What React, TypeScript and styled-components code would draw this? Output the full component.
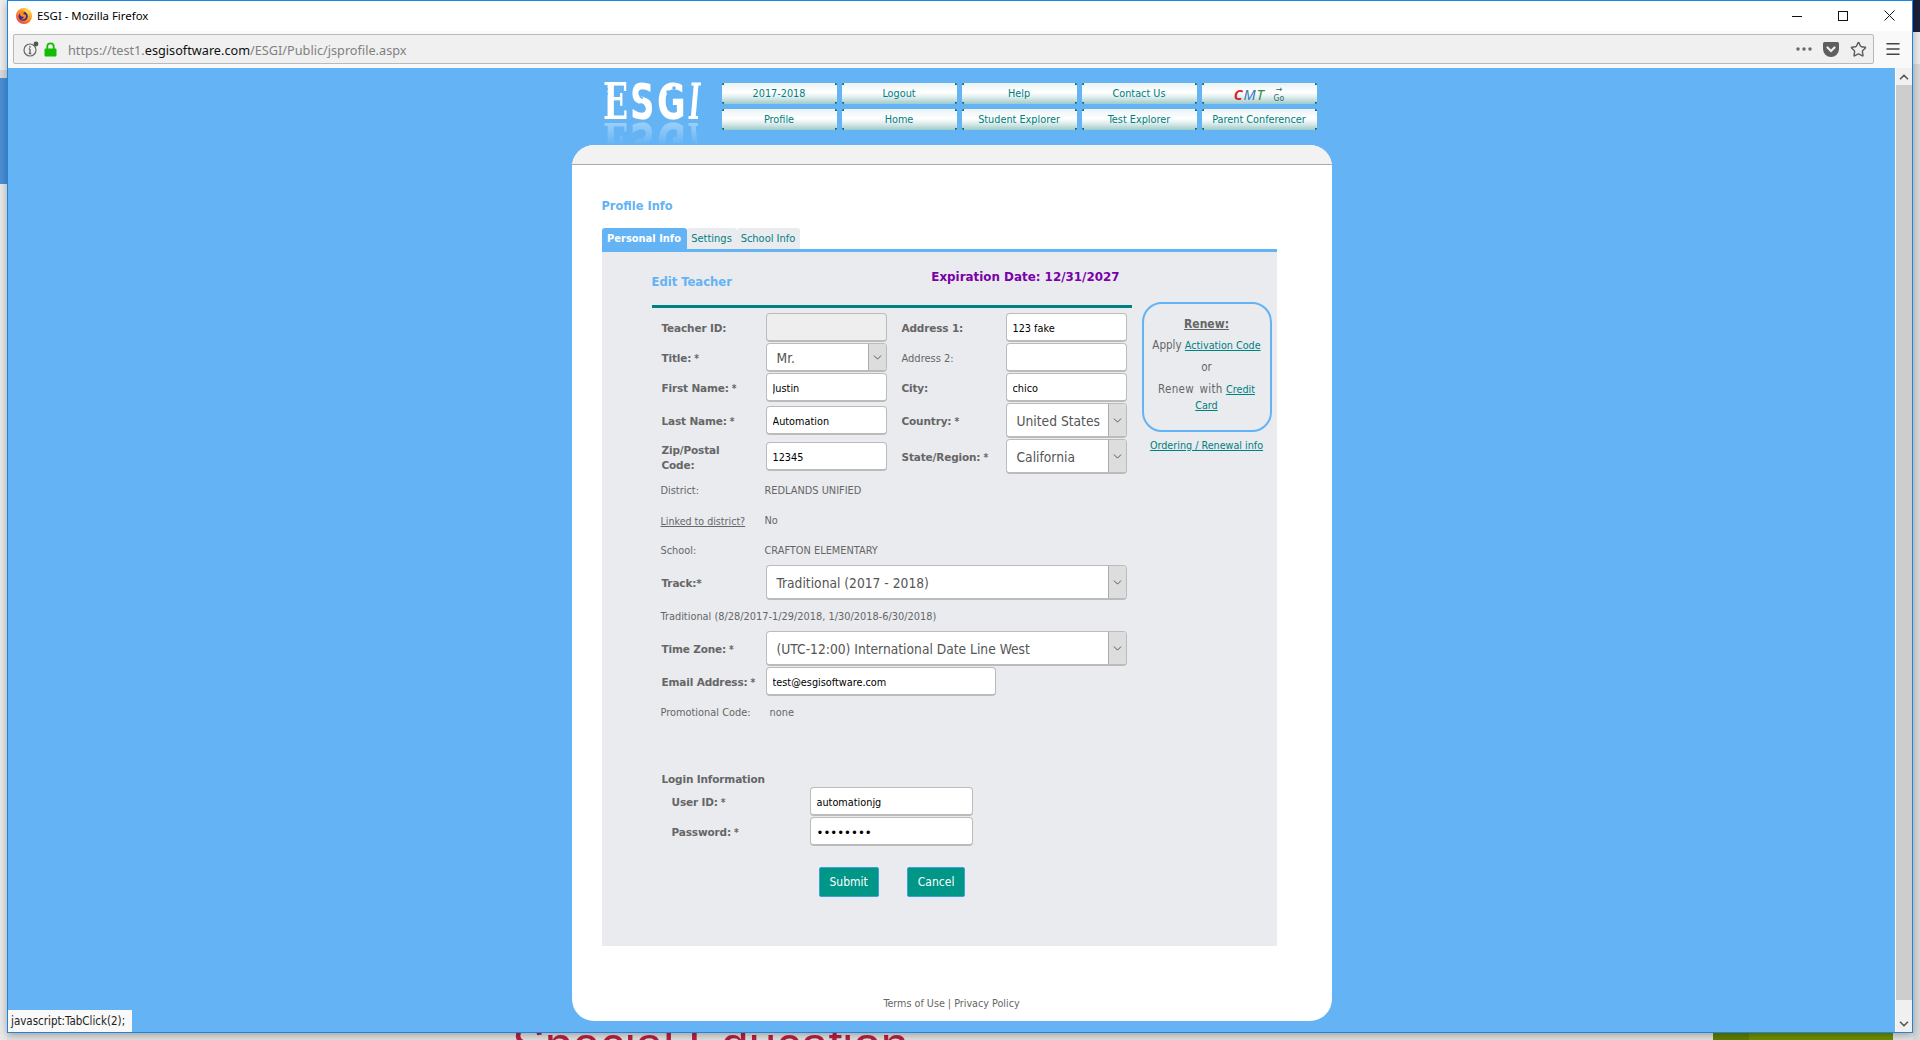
import React from "react";
import styled, { createGlobalStyle } from "styled-components";
import { ChevronDown, ChevronUp, Menu, Star } from "lucide-react";

const TAHOMA = `"DejaVu Sans Condensed", "DejaVu Sans", sans-serif`;
const VERDANA = `"DejaVu Sans", Verdana, sans-serif`;
const UI = `"Noto Sans", "Open Sans", sans-serif`;
const SKY = "#63b3f5";
const TEAL = "#008080";

const Global = createGlobalStyle`
  html, body { margin: 0; padding: 0; background: #e4e4e4; overflow: hidden; }
  * { box-sizing: border-box; }
`;

const Desktop = styled.div`
  position: relative;
  width: 1920px;
  height: 1040px;
  overflow: hidden;
  font-family: ${TAHOMA};
  background:
    linear-gradient(#eeeeee 0 70px, #d9d9d9 70px 78px, #4a8fd6 78px 184px, #e9e9e9 184px) left top / 7px 100% no-repeat,
    linear-gradient(#1a1f3a 0 32px, #ececec 32px 64px, #d8d8d8 64px) right top / 7px 100% no-repeat,
    #e2e2e2;
`;

const BackgroundText = styled.div`
  position: absolute;
  left: 512px;
  top: 1020px;
  font: 49.5px/1 "Liberation Sans", sans-serif;
  color: #b8203f;
  white-space: nowrap;
`;

const BackgroundBar = styled.div`
  position: absolute;
  left: 1713px;
  top: 1032px;
  width: 180px;
  height: 8px;
  background: linear-gradient(90deg, #5f7f00 0 36px, #6d8f00 36px);
`;

const Window = styled.div`
  position: absolute;
  left: 7px;
  top: 0;
  width: 1906px;
  height: 1033px;
  border: 1px solid #1b85e0;
  display: flex;
  flex-direction: column;
  background: #fff;
  box-shadow: 0 2px 8px rgba(0, 0, 0, 0.3);
`;

const TitleBar = styled.div`
  height: 30px;
  flex: none;
  display: flex;
  align-items: center;
  padding: 0 0 1px 8px;
  background: #fff;
`;

const AppTitle = styled.span`
  margin-left: 5px;
  font: 11.4px ${UI};
  color: #000;
`;

const WindowControls = styled.div`
  margin-left: auto;
  display: flex;
  color: #111;
`;

const ControlButton = styled.span`
  width: 46px;
  height: 29px;
  display: flex;
  align-items: center;
  justify-content: center;
`;

const Toolbar = styled.div`
  height: 37px;
  flex: none;
  display: flex;
  align-items: flex-start;
  padding: 3px 0 0 5px;
  background: #f9f9f9;
`;

const UrlBar = styled.div`
  width: 1861px;
  height: 30px;
  display: flex;
  align-items: center;
  padding-left: 9px;
  background: #f0f0f0;
  border: 1px solid #b9b9b9;
  border-radius: 2px;
`;

const LockSlot = styled.span`
  margin-left: 5px;
  display: flex;
`;

const UrlText = styled.span`
  margin-left: 11px;
  padding-top: 2px;
  font: 12.7px ${UI};
  color: #808080;
  white-space: nowrap;
`;

const UrlDomain = styled.span`
  color: #111;
`;

const UrlActions = styled.div`
  margin-left: auto;
  display: flex;
  align-items: center;
  gap: 11px;
  padding-right: 6px;
  color: #5c5c5c;
`;

const MenuButton = styled.div`
  width: 38px;
  height: 30px;
  display: flex;
  align-items: center;
  justify-content: center;
  color: #444;
`;

const Viewport = styled.div`
  flex: 1;
  position: relative;
  display: flex;
  min-height: 0;
  background: ${SKY};
`;

const PageArea = styled.div`
  flex: 1;
  display: flex;
  flex-direction: column;
  align-items: center;
  overflow: hidden;
`;

const Scrollbar = styled.div`
  width: 17px;
  flex: none;
  display: flex;
  flex-direction: column;
  border-left: 1px solid #fff;
  background: #f0f0f0;
`;

const ScrollArrow = styled.div`
  height: 17px;
  flex: none;
  display: flex;
  align-items: center;
  justify-content: center;
  color: #5a5a5a;
`;

const ScrollThumb = styled.div`
  height: 915px;
  flex: none;
  background: #cdcdcd;
`;

const ScrollTrack = styled.div`
  flex: 1;
`;

const StatusTip = styled.div`
  position: absolute;
  left: 0;
  bottom: 0;
  width: 124px;
  height: 22px;
  display: flex;
  align-items: center;
  padding-left: 3px;
  background: #f9f9f9;
  font: 11.5px ${TAHOMA};
  color: #222;
`;

const Header = styled.header`
  width: 760px;
  height: 77px;
  flex: none;
  display: flex;
  align-items: flex-start;
  padding: 15px 0 0 31px;
`;

const LogoWord = styled.div`
  position: relative;
  width: 96px;
  height: 38px;
  flex: none;
  display: flex;
  color: #fff;
  -webkit-box-reflect: below 0 linear-gradient(transparent 35%, rgba(255, 255, 255, 0.4));
`;

const LogoLetter = styled.span<{ $width: number; $scale: number; $serif?: boolean; $skew?: number }>`
  width: ${(p) => p.$width}px;
  flex: none;
  overflow: visible;
  white-space: nowrap;
  font: bold 50px/38px ${(p) => (p.$serif ? `"DejaVu Serif", serif` : `"DejaVu Sans", sans-serif`)};
  transform-origin: 0 100%;
  transform: scaleX(${(p) => p.$scale}) skewX(${(p) => p.$skew ?? 0}deg);
`;

const LogoSwirls = styled.svg`
  position: absolute;
  left: 0;
  top: 0;
`;

const NavGrid = styled.nav`
  margin-left: 23px;
  display: grid;
  grid-template-columns: repeat(5, 115px);
  grid-auto-rows: 21px;
  gap: 5px;
`;

const NavButton = styled.a`
  display: flex;
  align-items: center;
  justify-content: center;
  font: 10.8px ${TAHOMA};
  color: ${TEAL};
  border-radius: 2px;
  background:
    linear-gradient(#0c7070, #0c7070) 0 0 / 2px 2px no-repeat,
    linear-gradient(#0c7070, #0c7070) 100% 0 / 2px 2px no-repeat,
    linear-gradient(#0c7070, #0c7070) 0 100% / 2px 2px no-repeat,
    linear-gradient(#0c7070, #0c7070) 100% 100% / 2px 2px no-repeat,
    linear-gradient(#eaf2f2 0%, #ffffff 45%, #e4f0f0 65%, #9fcaca 100%);
`;

const CmtLetter = styled.span<{ $color: string; $bold?: boolean }>`
  font: italic ${(p) => (p.$bold ? "bold" : "normal")} 14.5px ${UI};
  letter-spacing: 0.8px;
  color: ${(p) => p.$color};
`;

const GoMark = styled.span`
  margin-left: 9px;
  display: inline-flex;
  flex-direction: column;
  align-items: center;
  font-size: 8.5px;
  line-height: 9px;
  color: #2a6a6a;
`;

const Card = styled.main`
  width: 760px;
  height: 876px;
  flex: none;
  border-radius: 22px;
  overflow: hidden;
  background: #fff;
`;

const CardBand = styled.div`
  height: 20px;
  background: #f2f2f2;
  border-bottom: 1px solid #aaa;
`;

const CardBody = styled.div`
  padding: 33px 55px 0 30px;
  display: flex;
  flex-direction: column;
`;

const PageTitle = styled.h1`
  margin: 0 0 14px;
  font: bold 12.7px/16px ${TAHOMA};
  color: ${SKY};
`;

const TabRow = styled.div`
  display: flex;
  height: 21px;
`;

const Tab = styled.a<{ $active?: boolean; $width: number }>`
  width: ${(p) => p.$width}px;
  display: flex;
  align-items: center;
  justify-content: center;
  border-radius: 3px 3px 0 0;
  font: ${(p) => (p.$active ? "bold" : "normal")} 11px ${TAHOMA};
  color: ${(p) => (p.$active ? "#fff" : TEAL)};
  background: ${(p) => (p.$active ? SKY : "#e9ebef")};
`;

const Panel = styled.section`
  height: 697px;
  display: flex;
  padding-left: 50px;
  border-top: 3px solid ${SKY};
  background: #e9ebef;
`;

const MainColumn = styled.div`
  width: 480px;
  flex: none;
`;

const PanelHeading = styled.div`
  height: 56px;
  display: flex;
  justify-content: space-between;
  padding-right: 12px;
  border-bottom: 3px solid ${TEAL};
`;

const EditTitle = styled.h2`
  margin: 22px 0 0;
  font: bold 12.9px/16px ${TAHOMA};
  color: ${SKY};
`;

const Expiration = styled.div`
  margin-top: 17px;
  font: bold 11.9px/16px ${VERDANA};
  color: #7a00a8;
`;

const FormBody = styled.div`
  padding: 4.5px 0 0 10px;
  width: 475px;
`;

const FieldGrid = styled.div`
  display: grid;
  grid-template-columns: 104px 121px 119px 121px;
  grid-template-rows: 30px 30px 30px 36px 36px;
  align-items: center;
`;

const BoldLabel = styled.label<{ $indent?: number }>`
  margin-top: 2px;
  padding-left: ${(p) => p.$indent ?? 0}px;
  font: bold 10.5px/15px ${VERDANA};
  letter-spacing: -0.15px;
  color: #666;
`;

const Req = styled.span`
  margin-left: 3px;
  font: bold 10px ${TAHOMA};
`;

const PlainLabel = styled.label<{ $indent?: number }>`
  margin-top: 2px;
  padding-left: ${(p) => p.$indent ?? 0}px;
  font: 11px/15px ${TAHOMA};
  color: #666;
`;

const TextInput = styled.input<{ $width?: number }>`
  width: ${(p) => p.$width ?? 121}px;
  height: 29px;
  padding: 2px 6px 0;
  border: 1px solid #bbb;
  border-bottom-width: 2px;
  border-radius: 4px;
  outline: none;
  background: #fff;
  font: 10.8px ${TAHOMA};
  color: #000;
  &:disabled { background: #eee; }
`;

const PasswordInput = styled(TextInput)`
  font-size: 13px;
`;

const SelectBox = styled.div<{ $height: number }>`
  height: ${(p) => p.$height}px;
  display: flex;
  align-items: center;
  overflow: hidden;
  border: 1px solid #bbb;
  border-bottom-width: 2px;
  border-radius: 4px;
  background: #fff;
  font: 13.7px ${TAHOMA};
  color: #555;
`;

const SelectValue = styled.span`
  flex: 1;
  padding: 2px 0 0 10px;
  white-space: nowrap;
`;

const SelectArrow = styled.span`
  width: 18px;
  height: 100%;
  flex: none;
  display: flex;
  align-items: center;
  justify-content: center;
  background: #dddddd;
  border-left: 1px solid #aaa;
  color: #444;
`;

const InfoRow = styled.div<{ $height: number; $label?: number }>`
  height: ${(p) => p.$height}px;
  margin-left: -1px;
  padding-top: 2px;
  display: grid;
  grid-template-columns: ${(p) => p.$label ?? 104}px 1fr;
  align-items: center;
  font: 10.9px ${TAHOMA};
  color: #666;
`;

const UnderlinedLabel = styled.a`
  color: #666;
  font-size: 10.6px;
  text-decoration: underline;
`;

const ControlRow = styled.div<{ $height: number; $label?: number; $indent?: number }>`
  height: ${(p) => p.$height}px;
  padding-left: ${(p) => p.$indent ?? 0}px;
  display: grid;
  grid-template-columns: ${(p) => p.$label ?? 104}px 1fr;
  align-items: center;
`;

const LoginHeading = styled.h3`
  margin: 44px 0 0;
  font: bold 10.5px/16px ${VERDANA};
  letter-spacing: -0.15px;
  color: #666;
`;

const ButtonRow = styled.div`
  margin: 20px 0 0 157px;
  display: flex;
  gap: 28px;
`;

const SubmitButton = styled.button`
  height: 30px;
  padding: 0 10px;
  border: 1px solid #3f9fd8;
  border-radius: 2px;
  background: #009688;
  font: 12px ${TAHOMA};
  color: #fff;
`;

const SideColumn = styled.aside`
  width: 130px;
  margin: 50px 0 0 10px;
  flex: none;
`;

const RenewBox = styled.div`
  height: 130px;
  padding-top: 12px;
  border: 2px solid ${SKY};
  border-radius: 20px;
  text-align: center;
  font: 11.5px/16px ${TAHOMA};
  color: #666;
`;

const RenewTitle = styled.div`
  margin-bottom: 5px;
  font: bold 12px/16px ${TAHOMA};
  text-decoration: underline;
`;

const RenewLine = styled.div`
  margin-bottom: 6px;
`;

const WideWords = styled.span`
  word-spacing: 2px;
  letter-spacing: 0.3px;
`;

const TealLink = styled.a`
  color: ${TEAL};
  text-decoration: underline;
  font-size: 10.7px;
  line-height: 12px;
`;

const OrderingLine = styled.div`
  margin-top: 6px;
  text-align: center;
  font: 10.7px/16px ${TAHOMA};
`;

const Footer = styled.footer`
  margin-top: 50px;
  padding-left: 25px;
  text-align: center;
  font: 10.7px/16px ${TAHOMA};
  color: #666;
`;

function FirefoxIcon() {
  return (
    <svg width="16" height="16" viewBox="0 0 16 16">
      <defs>
        <radialGradient id="ff" cx="0.7" cy="0.2" r="1">
          <stop offset="0" stopColor="#ffe14d" />
          <stop offset="0.5" stopColor="#ff9a1f" />
          <stop offset="1" stopColor="#e3244a" />
        </radialGradient>
      </defs>
      <circle cx="8" cy="8" r="8" fill="url(#ff)" />
      <circle cx="7.2" cy="8.2" r="4.6" fill="#3a2a8c" />
      <path d="M3 4c2-2 5-2 6 0-1 0-2 1-1.5 2 1.5 0 3 1 2.5 3-.5 2-3 3-5 2 2 0 3-1 2.5-2.5C6 9 4 8 4 6.5z" fill="#ff8a1f" />
    </svg>
  );
}

function InfoIcon() {
  return (
    <svg width="16" height="16" viewBox="0 0 16 16" fill="none" stroke="#666">
      <circle cx="7" cy="9" r="6" strokeWidth="1.2" />
      <path d="M7 8v4.5M5.7 12.5h2.6M5.8 8H7" strokeWidth="1.3" />
      <circle cx="7" cy="5.8" r="0.9" fill="#666" stroke="none" />
      <circle cx="13" cy="3" r="2.4" fill="#555" stroke="none" />
    </svg>
  );
}

function LockIcon() {
  return (
    <svg width="13" height="15" viewBox="0 0 13 15" fill="none">
      <path d="M3.3 7V4.5a3.2 3.2 0 0 1 6.4 0V7" stroke="#12bc00" strokeWidth="1.8" />
      <rect x="0.5" y="6.5" width="12" height="8" rx="1" fill="#12bc00" />
    </svg>
  );
}

function DotsIcon() {
  return (
    <svg width="16" height="4" viewBox="0 0 16 4" fill="#666">
      <circle cx="2" cy="2" r="1.7" />
      <circle cx="8" cy="2" r="1.7" />
      <circle cx="14" cy="2" r="1.7" />
    </svg>
  );
}

function PocketIcon() {
  return (
    <svg width="16" height="15" viewBox="0 0 16 15">
      <path d="M1.5 0h13A1.5 1.5 0 0 1 16 1.5V7A8 8 0 0 1 0 7V1.5A1.5 1.5 0 0 1 1.5 0z" fill="#5f5f5f" />
      <path d="M4.5 5.5L8 9l3.5-3.5" fill="none" stroke="#f0f0f0" strokeWidth="2.2" strokeLinecap="round" />
    </svg>
  );
}

function MinimizeGlyph() {
  return (
    <svg width="10" height="10" viewBox="0 0 10 10" shapeRendering="crispEdges">
      <path d="M0 5.5h10" stroke="#111" />
    </svg>
  );
}

function MaximizeGlyph() {
  return (
    <svg width="10" height="10" viewBox="0 0 10 10" shapeRendering="crispEdges">
      <rect x="0.5" y="0.5" width="9" height="9" fill="none" stroke="#111" />
    </svg>
  );
}

function CloseGlyph() {
  return (
    <svg width="11" height="11" viewBox="0 0 11 11">
      <path d="M0.5 0.5l10 10M10.5 0.5l-10 10" stroke="#111" strokeWidth="1" />
    </svg>
  );
}

function EsgiLogo() {
  return (
    <LogoWord>
      <LogoLetter $serif $width={27} $scale={0.66}>E</LogoLetter>
      <LogoLetter $width={27} $scale={0.68}>S</LogoLetter>
      <LogoLetter $width={30} $scale={0.7}>G</LogoLetter>
      <LogoLetter $serif $width={12} $scale={0.5} $skew={-10}>I</LogoLetter>
      <LogoSwirls width="96" height="38" viewBox="0 0 96 38" aria-hidden="true">
        <path d="M43 12a3 3 0 1 0-3 3M38 27a3 3 0 1 1 3-3" fill="none" stroke={SKY} strokeWidth="1.5" />
        <circle cx="71" cy="5" r="1.8" fill={SKY} />
        <circle cx="65" cy="9" r="1.8" fill={SKY} />
        <path d="M0 6h5M0 11h5" stroke={SKY} strokeWidth="1.5" />
      </LogoSwirls>
    </LogoWord>
  );
}

function Select({ value, height }: { value: string; height: number }) {
  return (
    <SelectBox $height={height}>
      <SelectValue>{value}</SelectValue>
      <SelectArrow>
        <ChevronDown size={13} strokeWidth={1.6} />
      </SelectArrow>
    </SelectBox>
  );
}

const navItems = ["2017-2018", "Logout", "Help", "Contact Us", "CMT", "Profile", "Home", "Student Explorer", "Test Explorer", "Parent Conferencer"];

export default function App() {
  return (
    <Desktop>
      <Global />
      <BackgroundText>Special Education</BackgroundText>
      <BackgroundBar />
      <Window>
        <TitleBar>
          <FirefoxIcon />
          <AppTitle>ESGI - Mozilla Firefox</AppTitle>
          <WindowControls>
            <ControlButton><MinimizeGlyph /></ControlButton>
            <ControlButton><MaximizeGlyph /></ControlButton>
            <ControlButton><CloseGlyph /></ControlButton>
          </WindowControls>
        </TitleBar>
        <Toolbar>
          <UrlBar>
            <InfoIcon />
            <LockSlot><LockIcon /></LockSlot>
            <UrlText>
              https://test1.<UrlDomain>esgisoftware.com</UrlDomain>/ESGI/Public/jsprofile.aspx
            </UrlText>
            <UrlActions>
              <DotsIcon />
              <PocketIcon />
              <Star size={17} strokeWidth={2} />
            </UrlActions>
          </UrlBar>
          <MenuButton><Menu size={18} strokeWidth={2} /></MenuButton>
        </Toolbar>
        <Viewport>
          <PageArea>
            <Header>
              <EsgiLogo />
              <NavGrid>
                {navItems.map((item) =>
                  item === "CMT" ? (
                    <NavButton key={item}>
                      <CmtLetter $color="#d8232a" $bold>C</CmtLetter>
                      <CmtLetter $color="#3a7ab8">M</CmtLetter>
                      <CmtLetter $color="#3a8a3a">T</CmtLetter>
                      <GoMark><span>→</span><span>Go</span></GoMark>
                    </NavButton>
                  ) : (
                    <NavButton key={item}>{item}</NavButton>
                  )
                )}
              </NavGrid>
            </Header>
            <Card>
              <CardBand />
              <CardBody>
                <PageTitle>Profile Info</PageTitle>
                <TabRow>
                  <Tab $active $width={85}>Personal Info</Tab>
                  <Tab $width={50}>Settings</Tab>
                  <Tab $width={63}>School Info</Tab>
                </TabRow>
                <Panel>
                  <MainColumn>
                    <PanelHeading>
                      <EditTitle>Edit Teacher</EditTitle>
                      <Expiration>Expiration Date: 12/31/2027</Expiration>
                    </PanelHeading>
                    <FormBody>
                      <FieldGrid>
                        <BoldLabel>Teacher ID:</BoldLabel>
                        <TextInput disabled />
                        <BoldLabel $indent={15}>Address 1:</BoldLabel>
                        <TextInput defaultValue="123 fake" />

                        <BoldLabel>Title:<Req>*</Req></BoldLabel>
                        <Select value="Mr." height={29} />
                        <PlainLabel $indent={15}>Address 2:</PlainLabel>
                        <TextInput />

                        <BoldLabel>First Name:<Req>*</Req></BoldLabel>
                        <TextInput defaultValue="Justin" />
                        <BoldLabel $indent={15}>City:</BoldLabel>
                        <TextInput defaultValue="chico" />

                        <BoldLabel>Last Name:<Req>*</Req></BoldLabel>
                        <TextInput defaultValue="Automation" />
                        <BoldLabel $indent={15}>Country:<Req>*</Req></BoldLabel>
                        <Select value="United States" height={35} />

                        <BoldLabel>Zip/Postal<br />Code:</BoldLabel>
                        <TextInput defaultValue="12345" />
                        <BoldLabel $indent={15}>State/Region:<Req>*</Req></BoldLabel>
                        <Select value="California" height={35} />
                      </FieldGrid>
                      <InfoRow $height={30}>
                        <span>District:</span>
                        <span>REDLANDS UNIFIED</span>
                      </InfoRow>
                      <InfoRow $height={30}>
                        <UnderlinedLabel>Linked to district?</UnderlinedLabel>
                        <span>No</span>
                      </InfoRow>
                      <InfoRow $height={30}>
                        <span>School:</span>
                        <span>CRAFTON ELEMENTARY</span>
                      </InfoRow>
                      <ControlRow $height={36}>
                        <BoldLabel>Track:*</BoldLabel>
                        <Select value="Traditional (2017 - 2018)" height={35} />
                      </ControlRow>
                      <InfoRow $height={30} $label={400}>
                        <span>Traditional (8/28/2017-1/29/2018, 1/30/2018-6/30/2018)</span>
                      </InfoRow>
                      <ControlRow $height={36}>
                        <BoldLabel>Time Zone:<Req>*</Req></BoldLabel>
                        <Select value="(UTC-12:00) International Date Line West" height={35} />
                      </ControlRow>
                      <ControlRow $height={30}>
                        <BoldLabel>Email Address:<Req>*</Req></BoldLabel>
                        <TextInput $width={230} defaultValue="test@esgisoftware.com" />
                      </ControlRow>
                      <InfoRow $height={30} $label={109}>
                        <span>Promotional Code:</span>
                        <span>none</span>
                      </InfoRow>
                      <LoginHeading>Login Information</LoginHeading>
                      <ControlRow $height={30} $label={138} $indent={10}>
                        <BoldLabel>User ID:<Req>*</Req></BoldLabel>
                        <TextInput $width={163} defaultValue="automationjg" />
                      </ControlRow>
                      <ControlRow $height={30} $label={138} $indent={10}>
                        <BoldLabel>Password:<Req>*</Req></BoldLabel>
                        <PasswordInput $width={163} type="password" defaultValue="abcdefgh" />
                      </ControlRow>
                      <ButtonRow>
                        <SubmitButton>Submit</SubmitButton>
                        <SubmitButton>Cancel</SubmitButton>
                      </ButtonRow>
                    </FormBody>
                  </MainColumn>
                  <SideColumn>
                    <RenewBox>
                      <RenewTitle>Renew:</RenewTitle>
                      <RenewLine>Apply <TealLink>Activation Code</TealLink></RenewLine>
                      <RenewLine>or</RenewLine>
                      <RenewLine><WideWords>Renew with</WideWords> <TealLink>Credit<br />Card</TealLink></RenewLine>
                    </RenewBox>
                    <OrderingLine><TealLink>Ordering / Renewal info</TealLink></OrderingLine>
                  </SideColumn>
                </Panel>
                <Footer>Terms of Use | Privacy Policy</Footer>
              </CardBody>
            </Card>
          </PageArea>
          <Scrollbar>
            <ScrollArrow><ChevronUp size={14} strokeWidth={3} /></ScrollArrow>
            <ScrollThumb />
            <ScrollTrack />
            <ScrollArrow><ChevronDown size={14} strokeWidth={3} /></ScrollArrow>
          </Scrollbar>
          <StatusTip>javascript:TabClick(2);</StatusTip>
        </Viewport>
      </Window>
    </Desktop>
  );
}
